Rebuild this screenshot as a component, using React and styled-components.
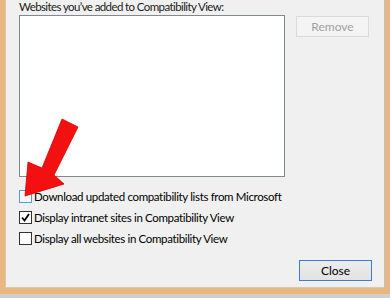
import React from "react";
import styled, { createGlobalStyle } from "styled-components";

const GlobalStyle = createGlobalStyle`
  html, body {
    margin: 0;
    padding: 0;
    background: #f0f0f0;
  }
  body {
    font-family: "Segoe UI", Lato, "Noto Sans", sans-serif;
    font-size: 11.5px;
    letter-spacing: -0.35px;
    color: #000;
  }
`;

const Frame = styled.div`
  position: relative;
  width: 390px;
  height: 298px;
  box-sizing: border-box;
  overflow: hidden;
  background: #cfcfcf;
  padding-bottom: 4px;
`;

const Panel = styled.div`
  box-sizing: border-box;
  height: 294px;
  border-left: 5px solid #e8b880;
  border-right: 5px solid #e8b880;
  border-bottom: 6px solid #e8b880;
  box-shadow: inset 1px 0 0 #d8c8b0, inset -1px 0 0 #c0c0c0, inset 0 -1px 0 #d8c8b0;
  background: #f0f0f0;
  padding: 0 13px 0 14px;
  display: flex;
  flex-direction: column;
`;

const Label = styled.div`
  margin-top: -1px;
  height: 16px;
  line-height: 15px;
  letter-spacing: -0.6px;
  color: #1a1a1a;
`;

const TopRow = styled.div`
  display: flex;
  align-items: flex-start;
  gap: 11px;
`;

const ListBox = styled.div`
  width: 266px;
  height: 162px;
  box-sizing: border-box;
  background: #fff;
  border: 1px solid #828790;
`;

const Button = styled.button`
  width: 73px;
  height: 21px;
  box-sizing: border-box;
  padding: 0;
  font: inherit;
  font-size: 12px;
  letter-spacing: 0;
  line-height: 19px;
  color: ${(p) => (p.disabled ? "#a0a0a0" : "#000")};
  background: ${(p) => (p.disabled ? "#f4f4f4" : "linear-gradient(#ececec, #e3e3e3)")};
  border: 1px solid ${(p) => (p.primary ? "#3c7fd0" : p.disabled ? "#dadada" : "#adadad")};
`;

const RemoveButton = styled(Button)`
  margin-top: 1px;
`;

const Options = styled.div`
  margin-top: 9px;
  display: flex;
  flex-direction: column;
`;

const Row = styled.label`
  height: 21px;
  display: flex;
  align-items: center;
  gap: 2px;
`;

const Box = styled.span`
  width: 13px;
  height: 13px;
  box-sizing: border-box;
  border: 1px solid ${(p) => (p.hot ? "#5b9bd5" : "#333")};
  background: ${(p) => (p.hot ? "#f4f9fe" : "#fff")};
  display: flex;
  align-items: center;
  justify-content: center;
`;

const Footer = styled.div`
  margin-top: 11px;
  display: flex;
  justify-content: flex-end;
`;

const Arrow = styled.svg`
  position: absolute;
  left: 0;
  top: 0;
  pointer-events: none;
`;

const Check = () => (
  <svg width="9" height="9" viewBox="0 0 9 9">
    <path d="M1 4.5 L3.5 7.5 L8 1" fill="none" stroke="#000" strokeWidth="1.8" />
  </svg>
);

const Option = ({ text, checked, hot }) => (
  <Row>
    <Box hot={hot}>{checked && <Check />}</Box>
    <span>{text}</span>
  </Row>
);

export default function App() {
  return (
    <>
      <GlobalStyle />
      <Frame>
        <Panel>
          <Label>Websites you’ve added to Compatibility View:</Label>
          <TopRow>
            <ListBox />
            <RemoveButton disabled>Remove</RemoveButton>
          </TopRow>
          <Options>
            <Option hot text="Download updated compatibility lists from Microsoft" />
            <Option checked text="Display intranet sites in Compatibility View" />
            <Option text="Display all websites in Compatibility View" />
          </Options>
          <Footer>
            <Button primary>Close</Button>
          </Footer>
        </Panel>
        <Arrow width="390" height="298" viewBox="0 0 390 298">
          <polygon
            points="62,119 78,127 54,175 64,184 25,196 28,162 42,168"
            fill="#f21010"
            stroke="#d80000"
            strokeWidth="0.8"
            strokeLinejoin="round"
          />
        </Arrow>
      </Frame>
    </>
  );
}
